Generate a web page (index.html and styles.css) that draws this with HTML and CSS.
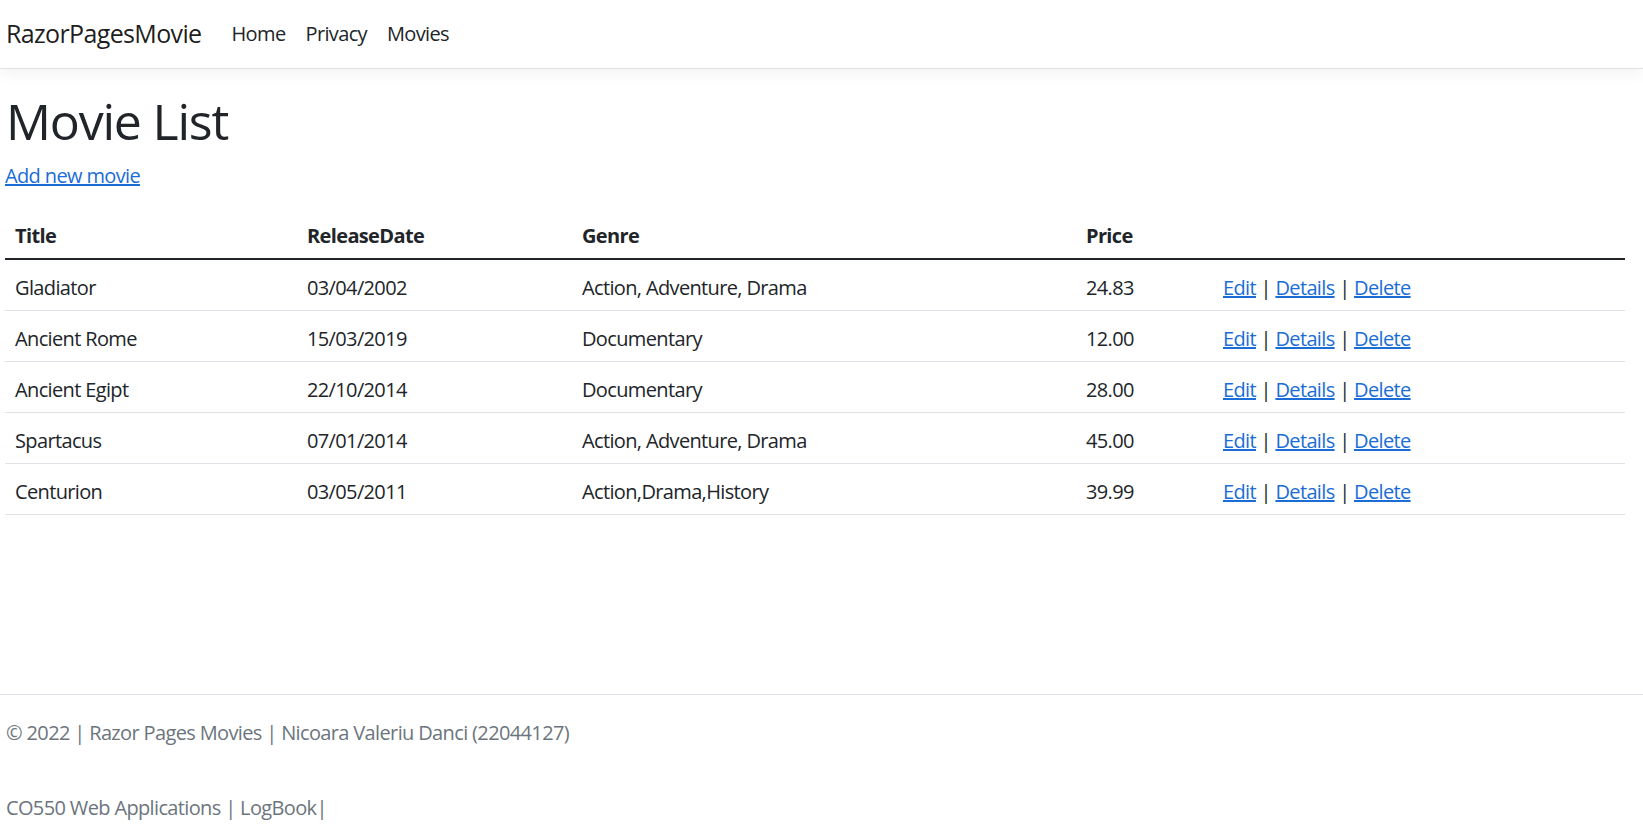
FILE: index.html
```html
<!DOCTYPE html>
<html lang="en">
<head>
<meta charset="utf-8">
<title>Movie List - RazorPagesMovie</title>
<link rel="stylesheet" href="styles.css">
</head>
<body>
<header class="navbar">
  <a class="brand" href="#">RazorPagesMovie</a>
  <nav class="nav">
    <a class="nav-link" href="#">Home</a>
    <a class="nav-link" href="#">Privacy</a>
    <a class="nav-link" href="#">Movies</a>
  </nav>
</header>
<main class="main">
  <h1 class="title">Movie List</h1>
  <p class="add"><a href="#" class="link">Add new movie</a></p>
  <table class="table">
    <colgroup>
      <col class="col-title">
      <col class="col-date">
      <col class="col-genre">
      <col class="col-price">
      <col class="col-actions">
    </colgroup>
    <thead>
      <tr><th>Title</th><th>ReleaseDate</th><th>Genre</th><th>Price</th><th></th></tr>
    </thead>
    <tbody>
      <tr><td>Gladiator</td><td>03/04/2002</td><td>Action, Adventure, Drama</td><td>24.83</td><td><a href="#" class="link">Edit</a> | <a href="#" class="link">Details</a> | <a href="#" class="link">Delete</a></td></tr>
      <tr><td>Ancient Rome</td><td>15/03/2019</td><td>Documentary</td><td>12.00</td><td><a href="#" class="link">Edit</a> | <a href="#" class="link">Details</a> | <a href="#" class="link">Delete</a></td></tr>
      <tr><td>Ancient Egipt</td><td>22/10/2014</td><td>Documentary</td><td>28.00</td><td><a href="#" class="link">Edit</a> | <a href="#" class="link">Details</a> | <a href="#" class="link">Delete</a></td></tr>
      <tr><td>Spartacus</td><td>07/01/2014</td><td>Action, Adventure, Drama</td><td>45.00</td><td><a href="#" class="link">Edit</a> | <a href="#" class="link">Details</a> | <a href="#" class="link">Delete</a></td></tr>
      <tr><td>Centurion</td><td>03/05/2011</td><td>Action,Drama,History</td><td>39.99</td><td><a href="#" class="link">Edit</a> | <a href="#" class="link">Details</a> | <a href="#" class="link">Delete</a></td></tr>
    </tbody>
  </table>
</main>
<footer class="footer">
  <div class="footer-line">© 2022 | Razor Pages Movies | Nicoara Valeriu Danci (22044127)</div>
  <div class="footer-line">CO550 Web Applications | LogBook|</div>
</footer>
</body>
</html>
```
FILE: styles.css
```css
html, body {
  margin: 0;
  height: 100%;
}

body {
  font-family: "Open Sans", "Noto Sans", sans-serif;
  font-size: 20px;
  line-height: 1.5;
  letter-spacing: -0.032em;
  color: #212529;
  background: #fff;
  display: flex;
  flex-direction: column;
  overflow: hidden;
}

.navbar {
  flex-shrink: 0;
  display: flex;
  align-items: center;
  height: 68px;
  padding: 0 5px;
  border-bottom: 1px solid #dee2e6;
  box-shadow: 0 5px 15px rgba(0, 0, 0, 0.05);
  background: #fff;
}

.brand {
  font-size: 25px;
  line-height: 37.5px;
  color: rgba(0, 0, 0, 0.9);
  text-decoration: none;
  margin: 0 20px 0 1px;
}

.nav {
  display: flex;
}

.nav-link {
  padding: 0 10px;
  color: #212529;
  text-decoration: none;
}

.main {
  flex: 1;
  padding: 22px 18px 0 5px;
}

.title {
  font-size: 50px;
  font-weight: 400;
  line-height: 1.2;
  letter-spacing: -0.024em;
  margin: 0 0 10px 1px;
}

.add {
  margin: 2px 0 17px;
}

.link {
  color: #1a6dd6;
  text-decoration: underline;
}

.table {
  width: 100%;
  border-collapse: collapse;
  table-layout: fixed;
}

.col-title { width: 292px; }
.col-date { width: 275px; }
.col-genre { width: 504px; }
.col-price { width: 137px; }

.table th,
.table td {
  padding: 13px 10px 7px;
  text-align: left;
  vertical-align: top;
  white-space: nowrap;
}

.table th {
  font-weight: 700;
  border-bottom: 2px solid #212529;
}

.table td {
  border-bottom: 1px solid #dee2e6;
}

.footer {
  flex-shrink: 0;
  border-top: 1px solid #dee2e6;
  color: #6c757d;
  line-height: 75px;
  padding-left: 6px;
  margin-bottom: -6px;
  white-space: nowrap;
}
```
